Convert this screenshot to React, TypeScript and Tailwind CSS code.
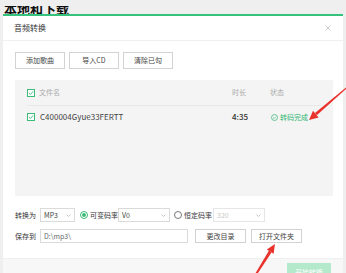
import React from "react";

const Chevron = () => (
  <svg width="5" height="3" viewBox="0 0 5 3" className="shrink-0">
    <path d="M0.5 0.5 L2.5 2.5 L4.5 0.5" fill="none" stroke="#bbb" strokeWidth="0.8" />
  </svg>
);

const Check = () => (
  <div className="w-[8px] h-[8px] border border-[#3dbb78] flex items-center justify-center bg-white shrink-0">
    <svg width="6" height="6" viewBox="0 0 6 6">
      <path d="M0.8 3 L2.4 4.5 L5.2 1.3" fill="none" stroke="#3dbb78" strokeWidth="0.9" />
    </svg>
  </div>
);

const Select = ({ w, text, disabled }: { w: string; text: string; disabled?: boolean }) => (
  <div
    className={`${w} h-[14px] border ${disabled ? "border-[#e6e6e6] text-[#c8c8c8]" : "border-[#dadada] text-[#444]"} bg-white flex items-center justify-between pl-[3px] pr-[3px] text-[7px] shrink-0`}
  >
    <span>{text}</span>
    <Chevron />
  </div>
);

const Btn = ({ w, h, text }: { w: string; h: string; text: string }) => (
  <div className={`${w} ${h} border border-[#d3d3d3] bg-white flex items-center justify-center text-[7px] text-[#444] shrink-0`}>
    {text}
  </div>
);

export default function App() {
  return (
    <div className="relative w-[346px] h-[273px] overflow-hidden bg-[#efefef] font-['Noto_Sans_CJK_SC','Noto_Sans',sans-serif] flex flex-col">
      <div className="h-[8px] mt-[6px] overflow-hidden pl-[4px] shrink-0">
        <div className="-mt-[4px] text-[13px] leading-[13px] font-bold text-[#111]">本地和下载</div>
      </div>
      <div className="h-[2px] mx-[3px] bg-[#34c27d] shrink-0" />
      <div className="mx-[3px] flex-1 bg-white flex flex-col">
        <div className="h-[25px] flex items-center justify-between pl-[11px] pr-[12px] border-b border-[#f0f0f0] shrink-0">
          <span className="text-[8px] text-[#333]">音频转换</span>
          <svg width="6" height="6" viewBox="0 0 6 6">
            <path d="M0.5 0.5 L5.5 5.5 M5.5 0.5 L0.5 5.5" stroke="#bdbdbd" strokeWidth="0.8" />
          </svg>
        </div>
        <div className="pl-[12px] pt-[11px] flex flex-col">
          <div className="flex gap-[4px]">
            <Btn w="w-[50px]" h="h-[17px]" text="添加歌曲" />
            <Btn w="w-[50px]" h="h-[17px]" text="导入CD" />
            <Btn w="w-[50px]" h="h-[17px]" text="清除已勾" />
          </div>
          <div className="mt-[11px] w-[318px] h-[116px] bg-[#f4f4f4] px-[12px] flex flex-col">
            <div className="h-[26px] flex items-center border-b border-[#e8e8e8] text-[7px] text-[#aaa]">
              <div className="flex items-center gap-[4px] w-[205px]">
                <Check />
                <span>文件名</span>
              </div>
              <span className="w-[38px]">时长</span>
              <span>状态</span>
            </div>
            <div className="h-[22px] flex items-center">
              <div className="flex items-center gap-[5px] w-[205px]">
                <Check />
                <span className="text-[8px] text-[#444]">C400004Gyue33FERTT</span>
              </div>
              <span className="w-[39px] text-[8px] text-[#333] font-medium">4:35</span>
              <div className="flex items-center gap-[2px] text-[7px] text-[#2fb672]">
                <svg width="7" height="7" viewBox="0 0 7 7">
                  <circle cx="3.5" cy="3.5" r="3" fill="none" stroke="#2fb672" strokeWidth="0.7" />
                  <path d="M2 3.6 L3.1 4.6 L5 2.6" fill="none" stroke="#2fb672" strokeWidth="0.6" />
                </svg>
                <span>转码完成</span>
              </div>
            </div>
          </div>
          <div className="mt-[12px] flex items-center text-[7px] text-[#333]">
            <span className="w-[25px]">转换为</span>
            <Select w="w-[35px]" text="MP3" />
            <div className="ml-[5px] w-[8px] h-[8px] rounded-full border border-[#3dbb78] flex items-center justify-center">
              <div className="w-[4px] h-[4px] rounded-full bg-[#3dbb78]" />
            </div>
            <span className="ml-[2px] w-[28px]">可变码率</span>
            <Select w="w-[52px]" text="V0" />
            <div className="ml-[4px] w-[8px] h-[8px] rounded-full border border-[#777] bg-white" />
            <span className="ml-[2px] w-[29px]">恒定码率</span>
            <Select w="w-[52px]" text="320" disabled />
          </div>
          <div className="mt-[7px] flex items-center text-[7px] text-[#333]">
            <span className="w-[25px]">保存到</span>
            <div className="w-[148px] h-[14px] border border-[#dadada] bg-white flex items-center pl-[3px] text-[#666]">
              D:\mp3\
            </div>
            <div className="ml-[7px]">
              <Btn w="w-[51px]" h="h-[14px]" text="更改目录" />
            </div>
            <div className="ml-[5px]">
              <Btn w="w-[51px]" h="h-[14px]" text="打开文件夹" />
            </div>
          </div>
        </div>
        <div className="mt-[15px] flex-1 bg-[#f7f7f7] border-t border-[#efefef] flex justify-end pr-[12px] pt-[4px]">
          <div className="w-[44px] h-[18px] bg-[#b4e9cc] text-white text-[7px] flex items-center justify-center">开始转换</div>
        </div>
      </div>
      <svg className="absolute left-0 top-0 pointer-events-none" width="346" height="273" viewBox="0 0 346 273">
        <polygon points="346,87.5 346,89 316.8,115.3 315,113" fill="#e8332c" />
        <polygon points="309,120 318.6,117.4 313,110.8" fill="#e8332c" />
        <polygon points="255,274 257,274.5 271.5,252.5 269,250.5" fill="#e8332c" />
        <polygon points="275,244 273.6,253.8 266.8,249.4" fill="#e8332c" />
      </svg>
    </div>
  );
}
